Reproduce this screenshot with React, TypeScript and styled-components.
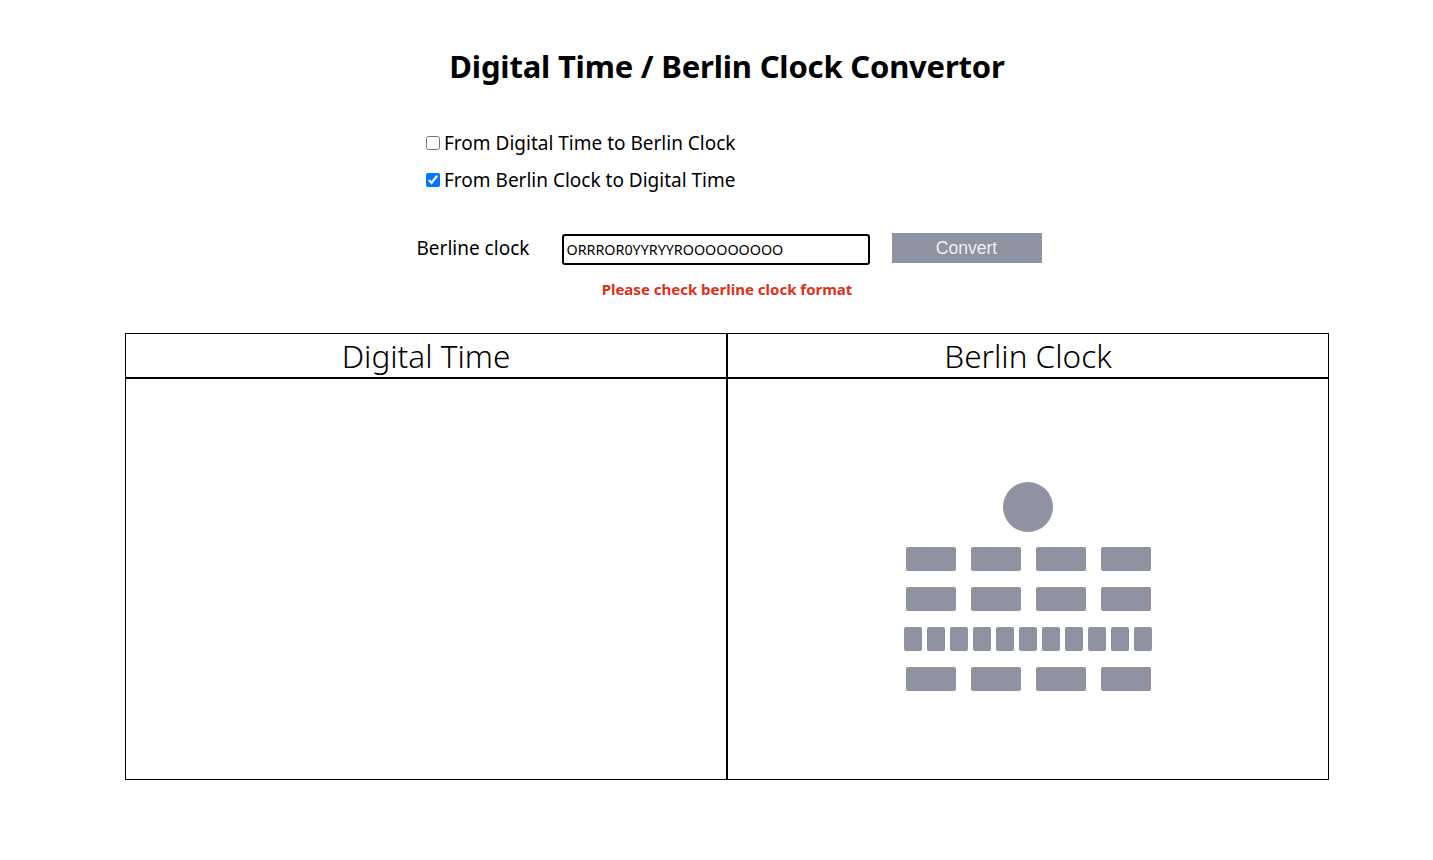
import React, { useState } from "react"
import styled, { createGlobalStyle } from "styled-components"

const GREY = "#8f93a1"

const GlobalStyle = createGlobalStyle`
    html, body {
        margin: 0;
        padding: 0;
        background: #fff;
        overflow-x: hidden;
    }
    body {
        font-family: "Noto Sans", "Open Sans", sans-serif;
        color: #000;
    }
`

export default function App() {
    const [mode, setMode] = useState<"toBerlin" | "toDigital">("toDigital")
    const [value, setValue] = useState("ORRROR0YYRYYROOOOOOOOO")

    return <Page>
        <GlobalStyle/>
        <Title>Digital Time / Berlin Clock Convertor</Title>
        <ModeList>
            <ModeLabel>
                <input type="checkbox" checked={mode === "toBerlin"} onChange={() => setMode("toBerlin")}/>
                From Digital Time to Berlin Clock
            </ModeLabel>
            <ModeLabel>
                <input type="checkbox" checked={mode === "toDigital"} onChange={() => setMode("toDigital")}/>
                From Berlin Clock to Digital Time
            </ModeLabel>
        </ModeList>
        <FormRow>
            <FieldLabel>Berline clock</FieldLabel>
            <ClockInput value={value} onChange={e => setValue(e.target.value)}/>
            <ConvertButton>Convert</ConvertButton>
        </FormRow>
        <ErrorText>Please check berline clock format</ErrorText>
        <ResultTable>
            <thead>
                <tr>
                    <HeadCell>Digital Time</HeadCell>
                    <HeadCell>Berlin Clock</HeadCell>
                </tr>
            </thead>
            <tbody>
                <tr>
                    <BodyCell/>
                    <BodyCell><BerlinClock/></BodyCell>
                </tr>
            </tbody>
        </ResultTable>
    </Page>
}

function BerlinClock() {
    return <ClockBox>
        <SecondsLamp/>
        <LampRow>{[0, 1, 2, 3].map(i => <Lamp key={i}/>)}</LampRow>
        <LampRow>{[0, 1, 2, 3].map(i => <Lamp key={i}/>)}</LampRow>
        <SmallLampRow>{Array.from({ length: 11 }, (_, i) => <SmallLamp key={i}/>)}</SmallLampRow>
        <LampRow>{[0, 1, 2, 3].map(i => <Lamp key={i}/>)}</LampRow>
    </ClockBox>
}


const Page = styled.div`
    width: 1454px;
    padding-top: 44px;
    display: flex;
    flex-direction: column;
    align-items: center;
`

const Title = styled.h1`
    margin: 0;
    font-size: 31px;
    font-weight: 700;
    line-height: 44px;
    letter-spacing: -0.2px;
`

const ModeList = styled.div`
    align-self: flex-start;
    margin: 42px 0 0 425px;
    display: flex;
    flex-direction: column;
    gap: 11px;
`

const ModeLabel = styled.label`
    display: flex;
    align-items: center;
    font-size: 19px;
    line-height: 26px;
    input {
        width: 14px;
        height: 14px;
        margin: 0 4px 0 1px;
        accent-color: #0075ff;
    }
`

const FormRow = styled.div`
    margin: 41px 0 0 4px;
    display: flex;
    align-items: center;
`

const FieldLabel = styled.span`
    font-size: 19px;
    width: 145px;
    padding-bottom: 4px;
`

const ClockInput = styled.input`
    box-sizing: border-box;
    width: 308px;
    height: 31px;
    border: 2px solid #000;
    border-radius: 3px;
    padding: 0 3px;
    font-family: "Noto Sans", sans-serif;
    font-size: 14.3px;
    outline: none;
`

const ConvertButton = styled.button`
    margin: -3px 0 0 22px;
    width: 150px;
    height: 30px;
    border: none;
    background: ${GREY};
    color: #eef0f3;
    font-family: "Liberation Sans", Arial, sans-serif;
    font-size: 17.5px;
`

const ErrorText = styled.div`
    margin-top: 13px;
    color: #dc2f1c;
    font-weight: 700;
    font-size: 15px;
    line-height: 22px;
`

const ResultTable = styled.table`
    margin-top: 33px;
    width: 1204px;
    border-spacing: 0;
    table-layout: fixed;
`

const HeadCell = styled.th`
    border: 1px solid #000;
    height: 43px;
    padding: 0;
    font-size: 31.5px;
    font-weight: 300;
    text-align: center;
`

const BodyCell = styled.td`
    border: 1px solid #000;
    height: 400px;
    padding: 0;
    vertical-align: middle;
`

const ClockBox = styled.div`
    padding-top: 14px;
    display: flex;
    flex-direction: column;
    align-items: center;
    gap: 16px;
`

const SecondsLamp = styled.div`
    width: 50px;
    height: 50px;
    border-radius: 50%;
    background: ${GREY};
    margin-bottom: -1px;
`

const LampRow = styled.div`
    display: flex;
    gap: 15px;
`

const Lamp = styled.div`
    width: 50px;
    height: 24px;
    border-radius: 2px;
    background: ${GREY};
`

const SmallLampRow = styled.div`
    display: flex;
    gap: 5px;
`

const SmallLamp = styled.div`
    width: 18px;
    height: 24px;
    border-radius: 2px;
    background: ${GREY};
`
